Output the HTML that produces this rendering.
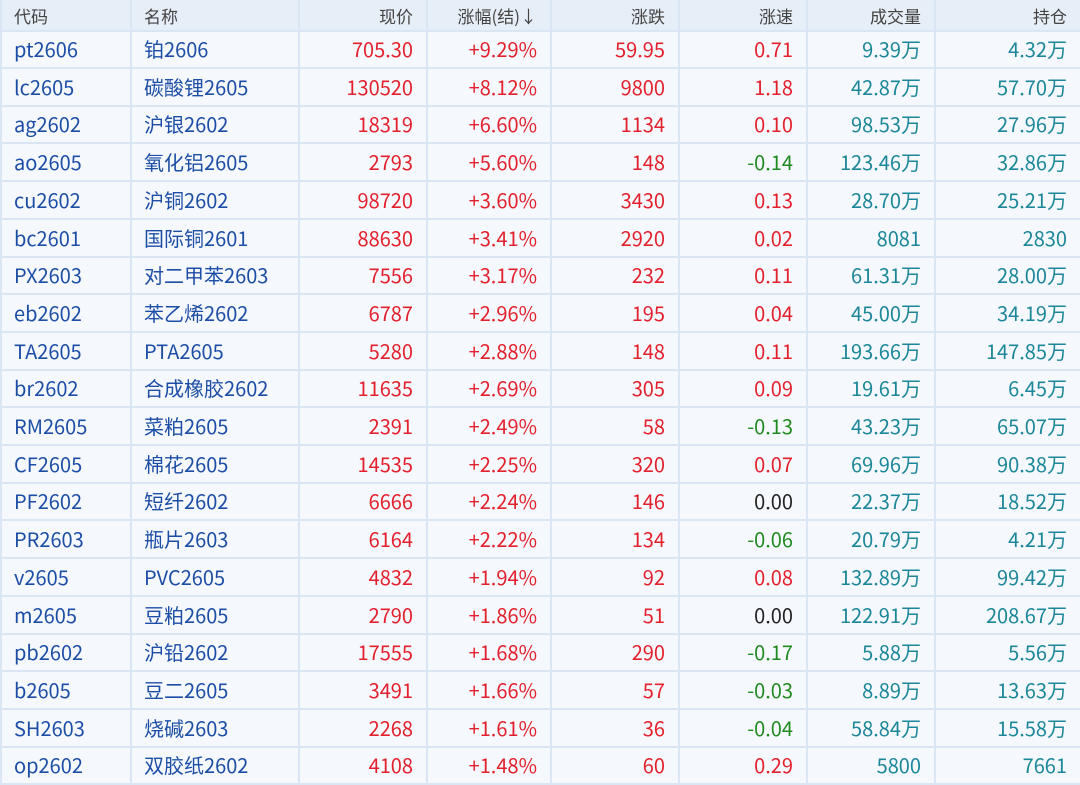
<!DOCTYPE html>
<html><head><meta charset="utf-8"><style>
body{margin:0;width:1080px;height:783px;overflow:hidden;background:#f5f8fc;font-family:"Noto Sans CJK SC","Liberation Sans",sans-serif;}
.r{position:absolute;left:0;width:1080px;border-bottom:2px solid #dbe6f4;box-sizing:border-box;}
.c{position:absolute;top:0;height:100%;display:flex;align-items:center;font-size:20px;line-height:1;box-sizing:border-box;border-left:2px solid #dbe6f4;white-space:nowrap;}
.l{padding-left:12px;color:#1d4ea6}
.rt{justify-content:flex-end;padding-right:13px}
.h .c{font-size:17px;color:#444}
.red{color:#e3202d}.grn{color:#1f8a1f}.blk{color:#222}.teal{color:#1b8799}
</style></head><body>
<div id="t"></div>
<script>
var cols=[[0,130],[130,298],[298,426],[426,550],[550,678],[678,806],[806,934],[934,1080]];
var d=[
["pt2606","铂2606","705.30","+9.29%","59.95","0.71","9.39万","4.32万"],
["lc2605","碳酸锂2605","130520","+8.12%","9800","1.18","42.87万","57.70万"],
["ag2602","沪银2602","18319","+6.60%","1134","0.10","98.53万","27.96万"],
["ao2605","氧化铝2605","2793","+5.60%","148","-0.14","123.46万","32.86万"],
["cu2602","沪铜2602","98720","+3.60%","3430","0.13","28.70万","25.21万"],
["bc2601","国际铜2601","88630","+3.41%","2920","0.02","8081","2830"],
["PX2603","对二甲苯2603","7556","+3.17%","232","0.11","61.31万","28.00万"],
["eb2602","苯乙烯2602","6787","+2.96%","195","0.04","45.00万","34.19万"],
["TA2605","PTA2605","5280","+2.88%","148","0.11","193.66万","147.85万"],
["br2602","合成橡胶2602","11635","+2.69%","305","0.09","19.61万","6.45万"],
["RM2605","菜粕2605","2391","+2.49%","58","-0.13","43.23万","65.07万"],
["CF2605","棉花2605","14535","+2.25%","320","0.07","69.96万","90.38万"],
["PF2602","短纤2602","6666","+2.24%","146","0.00","22.37万","18.52万"],
["PR2603","瓶片2603","6164","+2.22%","134","-0.06","20.79万","4.21万"],
["v2605","PVC2605","4832","+1.94%","92","0.08","132.89万","99.42万"],
["m2605","豆粕2605","2790","+1.86%","51","0.00","122.91万","208.67万"],
["pb2602","沪铅2602","17555","+1.68%","290","-0.17","5.88万","5.56万"],
["b2605","豆二2605","3491","+1.66%","57","-0.03","8.89万","13.63万"],
["SH2603","烧碱2603","2268","+1.61%","36","-0.04","58.84万","15.58万"],
["op2602","双胶纸2602","4108","+1.48%","60","0.29","5800","7661"]];
var hd=["代码","名称","现价","涨幅(结)↓","涨跌","涨速","成交量","持仓"];
var h='<div class="r h" style="top:0;height:32px;background:#e6eef8">';
hd.forEach(function(t,i){h+='<div class="c '+(i<2?'l':'rt')+'" style="left:'+cols[i][0]+'px;width:'+(cols[i][1]-cols[i][0])+'px;'+(i<2?'color:#444':'')+'">'+t+'</div>';});
h+='</div>';
d.forEach(function(r,k){
 var top=31+k*37.7;
 h+='<div class="r" style="top:'+top+'px;height:38px">';
 r.forEach(function(t,i){
  var cl='';
  if(i<2)cl='l';
  else if(i<5)cl='rt red';
  else if(i==5)cl='rt '+(t[0]=='-'?'grn':(t=='0.00'?'blk':'red'));
  else cl='rt teal';
  h+='<div class="c '+cl+'" style="left:'+cols[i][0]+'px;width:'+(cols[i][1]-cols[i][0])+'px">'+t+'</div>';
 });
 h+='</div>';
});
document.getElementById('t').innerHTML=h;
</script>
</body></html>
